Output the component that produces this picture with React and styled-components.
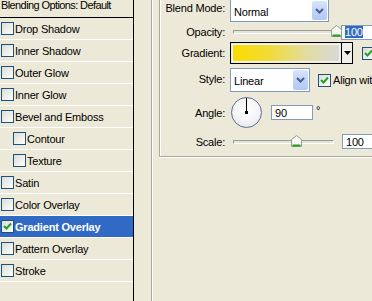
import React from "react";
import styled, { createGlobalStyle } from "styled-components";

const GlobalStyle = createGlobalStyle`
  html, body {
    margin: 0;
    padding: 0;
    background: #ece9d8;
    overflow: hidden;
  }
  body {
    font-family: Tahoma, "Liberation Sans", Arial, sans-serif;
    font-size: 11px;
    letter-spacing: -0.2px;
    color: #000;
  }
`;

const Window = styled.div`
  display: flex;
  width: 372px;
  height: 301px;
  overflow: hidden;
  background: #ece9d8;
`;

/* left style list */
const Sidebar = styled.div`
  width: 133px;
  flex-shrink: 0;
  border-right: 1px solid #000;
  display: flex;
  flex-direction: column;
`;

const Header = styled.div`
  height: 17px;
  border-bottom: 1px solid #000;
  padding-left: 1px;
  line-height: 11px;
  letter-spacing: -0.6px;
  white-space: nowrap;
  overflow: hidden;
`;

const StyleRow = styled.div`
  height: 21px;
  border-bottom: 1px solid #fff;
  display: flex;
  align-items: center;
  gap: 1px;
  padding-left: ${(p) => (p.$indent ? 13 : 1)}px;
  white-space: nowrap;
  background: ${(p) => (p.$active ? "#316ac5" : "transparent")};
  color: ${(p) => (p.$active ? "#fff" : "#000")};
  font-weight: ${(p) => (p.$active ? "bold" : "normal")};
`;

const Box = styled.span`
  width: 11px;
  height: 11px;
  flex-shrink: 0;
  border: 1px solid #1c5180;
  background: linear-gradient(135deg, #dcdcd7 0%, #f4f4f0 70%, #fff 100%);
  display: inline-flex;
  align-items: center;
  justify-content: center;
`;

const Check = ({ checked }) => (
  <Box>
    {checked && (
      <svg width="9" height="9" viewBox="0 0 9 9">
        <path d="M1 4 L3.5 6.5 L8 1.5" stroke="#21a121" strokeWidth="2" fill="none" />
      </svg>
    )}
  </Box>
);

/* right options */
const Pane = styled.div`
  flex: 1;
  padding-left: 17px;
  display: flex;
`;

const OuterGroup = styled.div`
  flex: 1;
  border-left: 1px solid #aca899;
  box-shadow: inset 1px 0 #fff;
  padding-left: 7px;
`;

const InnerGroup = styled.div`
  border-left: 1px solid #aca899;
  border-bottom: 1px solid #aca899;
  box-shadow: inset 1px 0 #fff, 0 1px #fff;
  margin-top: -1px;
  height: 157px;
  padding-left: 1px;
  display: flex;
  flex-direction: column;
`;

const Row = styled.div`
  height: ${(p) => p.$h}px;
  display: flex;
  align-items: center;
  white-space: nowrap;
`;

const Label = styled.span`
  width: 64px;
  margin-right: 5px;
  text-align: right;
  flex-shrink: 0;
  margin-top: ${(p) => p.$dy || 0}px;
`;

const Select = styled.div`
  width: ${(p) => p.$w}px;
  height: ${(p) => p.$hgt}px;
  box-sizing: border-box;
  border: 1px solid #7f9db9;
  background: #fff;
  display: flex;
  align-items: center;
  justify-content: space-between;
  padding: 1px;
  flex-shrink: 0;
`;

const SelectText = styled.span`
  padding-left: 2px;
  margin-top: 2px;
`;

const ArrowBtn = styled.span`
  width: 15px;
  align-self: stretch;
  border-radius: 2px;
  background: linear-gradient(180deg, #d9e4fd 0%, #c1d3fb 50%, #b4c8f6 100%);
  display: flex;
  align-items: center;
  justify-content: center;
`;

const Chevron = () => (
  <svg width="9" height="6" viewBox="0 0 9 6">
    <path d="M1 1 L4.5 4.5 L8 1" stroke="#4d6185" strokeWidth="2" fill="none" />
  </svg>
);

const Track = styled.div`
  position: relative;
  width: ${(p) => p.$w}px;
  height: 2px;
  border-top: 1px solid #9d9c99;
  border-left: 1px solid #9d9c99;
  border-bottom: 1px solid #fff;
  border-right: 1px solid #fff;
  background: #e6e4d8;
  margin-left: 3px;
  flex-shrink: 0;
`;

const ThumbWrap = styled.span`
  position: absolute;
  left: ${(p) => p.$x}px;
  top: -6px;
  line-height: 0;
`;

const Thumb = ({ x }) => (
  <ThumbWrap $x={x}>
    <svg width="11" height="12" viewBox="0 0 11 12">
      <path d="M0.5 4.5 L5.5 0.5 L10.5 4.5 V11.5 H0.5 Z" fill="#f7f7f4" stroke="#9a9a94" />
      <path d="M1.5 10.5 H9.5" stroke="#21a121" strokeWidth="2" />
    </svg>
  </ThumbWrap>
);

const Field = styled.div`
  width: ${(p) => p.$w}px;
  height: 15px;
  box-sizing: border-box;
  border: 1px solid #7f9db9;
  background: #fff;
  padding-left: 3px;
  display: flex;
  align-items: center;
  margin-left: ${(p) => p.$ml || 0}px;
  flex-shrink: 0;
`;

const Selected = styled.span`
  background: #316ac5;
  color: #fff;
`;

const GradientField = styled.div`
  width: 123px;
  height: 22px;
  box-sizing: border-box;
  border: 1px solid #000;
  display: flex;
  flex-shrink: 0;
`;

const Swatch = styled.div`
  flex: 1;
  margin: 1px;
  border: 1px solid #f4f4f0;
  background: linear-gradient(90deg, #fbdc00 0%, #f0db3a 35%, #e2dca2 70%, #d9d9d6 100%);
`;

const DropPart = styled.div`
  width: 10px;
  border-left: 1px solid #000;
  background: #f0efe8;
  display: flex;
  align-items: center;
  justify-content: center;
`;

const Extra = styled.span`
  display: flex;
  align-items: center;
  gap: 2px;
  margin-left: ${(p) => p.$ml}px;
`;

const Dial = styled.div`
  width: 29px;
  height: 29px;
  border-radius: 50%;
  border: 1px solid #5d6f94;
  background: radial-gradient(circle at 50% 40%, #fff 0%, #f4f4f6 55%, #d8dae2 100%);
  display: flex;
  align-items: center;
  justify-content: center;
  flex-shrink: 0;
  margin-left: 1px;
`;

const Degree = styled.span`
  margin-left: 3px;
  margin-top: -6px;
`;

const styles = [
  "Drop Shadow",
  "Inner Shadow",
  "Outer Glow",
  "Inner Glow",
  "Bevel and Emboss",
  ["Contour", true],
  ["Texture", true],
  "Satin",
  "Color Overlay",
  "Gradient Overlay",
  "Pattern Overlay",
  "Stroke",
];

export default function App() {
  return (
    <Window>
      <GlobalStyle />
      <Sidebar>
        <Header>Blending Options: Default</Header>
        {styles.map((s) => {
          const [name, indent] = Array.isArray(s) ? s : [s, false];
          const active = name === "Gradient Overlay";
          return (
            <StyleRow key={name} $indent={indent} $active={active}>
              <Check checked={active} />
              {name}
            </StyleRow>
          );
        })}
      </Sidebar>

      <Pane>
        <OuterGroup>
          <InnerGroup>
            <Row $h={23}>
              <Label $dy={-5}>Blend Mode:</Label>
              <Select $w={99} $hgt={23}>
                <SelectText>Normal</SelectText>
                <ArrowBtn>
                  <Chevron />
                </ArrowBtn>
              </Select>
            </Row>
            <Row $h={20}>
              <Label>Opacity:</Label>
              <Track $w={100}>
                <Thumb x={97} />
              </Track>
              <Field $w={40} $ml={6}>
                <Selected>100</Selected>
              </Field>
            </Row>
            <Row $h={22}>
              <Label>Gradient:</Label>
              <GradientField>
                <Swatch />
                <DropPart>
                  <svg width="7" height="4" viewBox="0 0 7 4">
                    <path d="M0 0 H7 L3.5 4 Z" fill="#000" />
                  </svg>
                </DropPart>
              </GradientField>
              <Extra $ml={9}>
                <Check checked />
                Reverse
              </Extra>
            </Row>
            <Row $h={32}>
              <Label $dy={-3}>Style:</Label>
              <Select $w={80} $hgt={24}>
                <SelectText>Linear</SelectText>
                <ArrowBtn>
                  <Chevron />
                </ArrowBtn>
              </Select>
              <Extra $ml={8}>
                <Check checked />
                Align with Layer
              </Extra>
            </Row>
            <Row $h={33}>
              <Label>Angle:</Label>
              <Dial>
                <svg width="29" height="29" viewBox="0 0 29 29">
                  <path d="M14.5 14.5 V0" stroke="#000" strokeWidth="1" />
                  <rect x="13" y="13" width="3" height="3" fill="#000" />
                </svg>
              </Dial>
              <Field $w={42} $ml={9}>
                90
              </Field>
              <Degree>°</Degree>
            </Row>
            <Row $h={25}>
              <Label>Scale:</Label>
              <Track $w={99}>
                <Thumb x={57} />
              </Track>
              <Field $w={40} $ml={8}>
                100
              </Field>
            </Row>
          </InnerGroup>
        </OuterGroup>
      </Pane>
    </Window>
  );
}
